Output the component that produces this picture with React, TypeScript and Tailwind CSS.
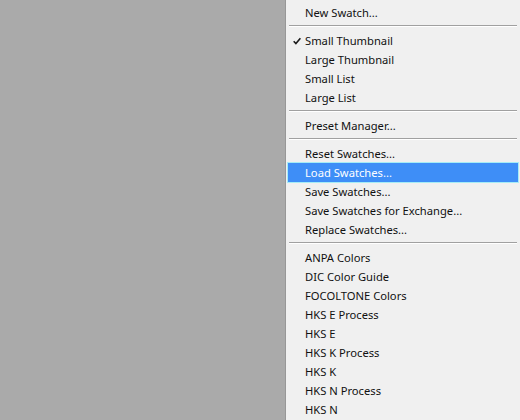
import React from 'react'

type Entry = { label: string; checked?: boolean; active?: boolean } | 'sep'

const entries: Entry[] = [
  { label: 'New Swatch...' },
  'sep',
  { label: 'Small Thumbnail', checked: true },
  { label: 'Large Thumbnail' },
  { label: 'Small List' },
  { label: 'Large List' },
  'sep',
  { label: 'Preset Manager...' },
  'sep',
  { label: 'Reset Swatches...' },
  { label: 'Load Swatches...', active: true },
  { label: 'Save Swatches...' },
  { label: 'Save Swatches for Exchange...' },
  { label: 'Replace Swatches...' },
  'sep',
  { label: 'ANPA Colors' },
  { label: 'DIC Color Guide' },
  { label: 'FOCOLTONE Colors' },
  { label: 'HKS E Process' },
  { label: 'HKS E' },
  { label: 'HKS K Process' },
  { label: 'HKS K' },
  { label: 'HKS N Process' },
  { label: 'HKS N' },
]

function Check() {
  return (
    <svg width="8" height="8" viewBox="0 0 8 8" className="absolute left-[5px] top-[6px]">
      <path d="M0.7 4.2 L2.9 6.6 L7.4 1.2" fill="none" stroke="#1a1a1a" strokeWidth="1.6" />
    </svg>
  )
}

export default function App() {
  return (
    <div className="w-[520px] h-[420px] overflow-hidden bg-[#aaaaaa] flex">
      <div className="w-[285px] shrink-0" />
      <div
        className="flex-1 bg-[#f0f0f0] border-l border-[#979797] pt-[3px] pl-[2px] pr-[2px] text-[11.2px] text-[#111]"
        style={{ fontFamily: '"Noto Sans", "Open Sans", sans-serif' }}
      >
        {entries.map((e, i) =>
          e === 'sep' ? (
            <div key={i} className="h-[9px] pt-[3px] px-[1px]">
              <div className="h-px bg-[#a0a0a0]" />
              <div className="h-px bg-white" />
            </div>
          ) : (
            <div
              key={i}
              className={
                'relative h-[19px] flex items-center pl-[17px] leading-none ' +
                (e.active ? 'bg-[#3e8ef7] text-white outline outline-1 outline-[#a6ecf6]' : '')
              }
            >
              {e.checked && <Check />}
              <span>{e.label}</span>
            </div>
          )
        )}
      </div>
    </div>
  )
}
